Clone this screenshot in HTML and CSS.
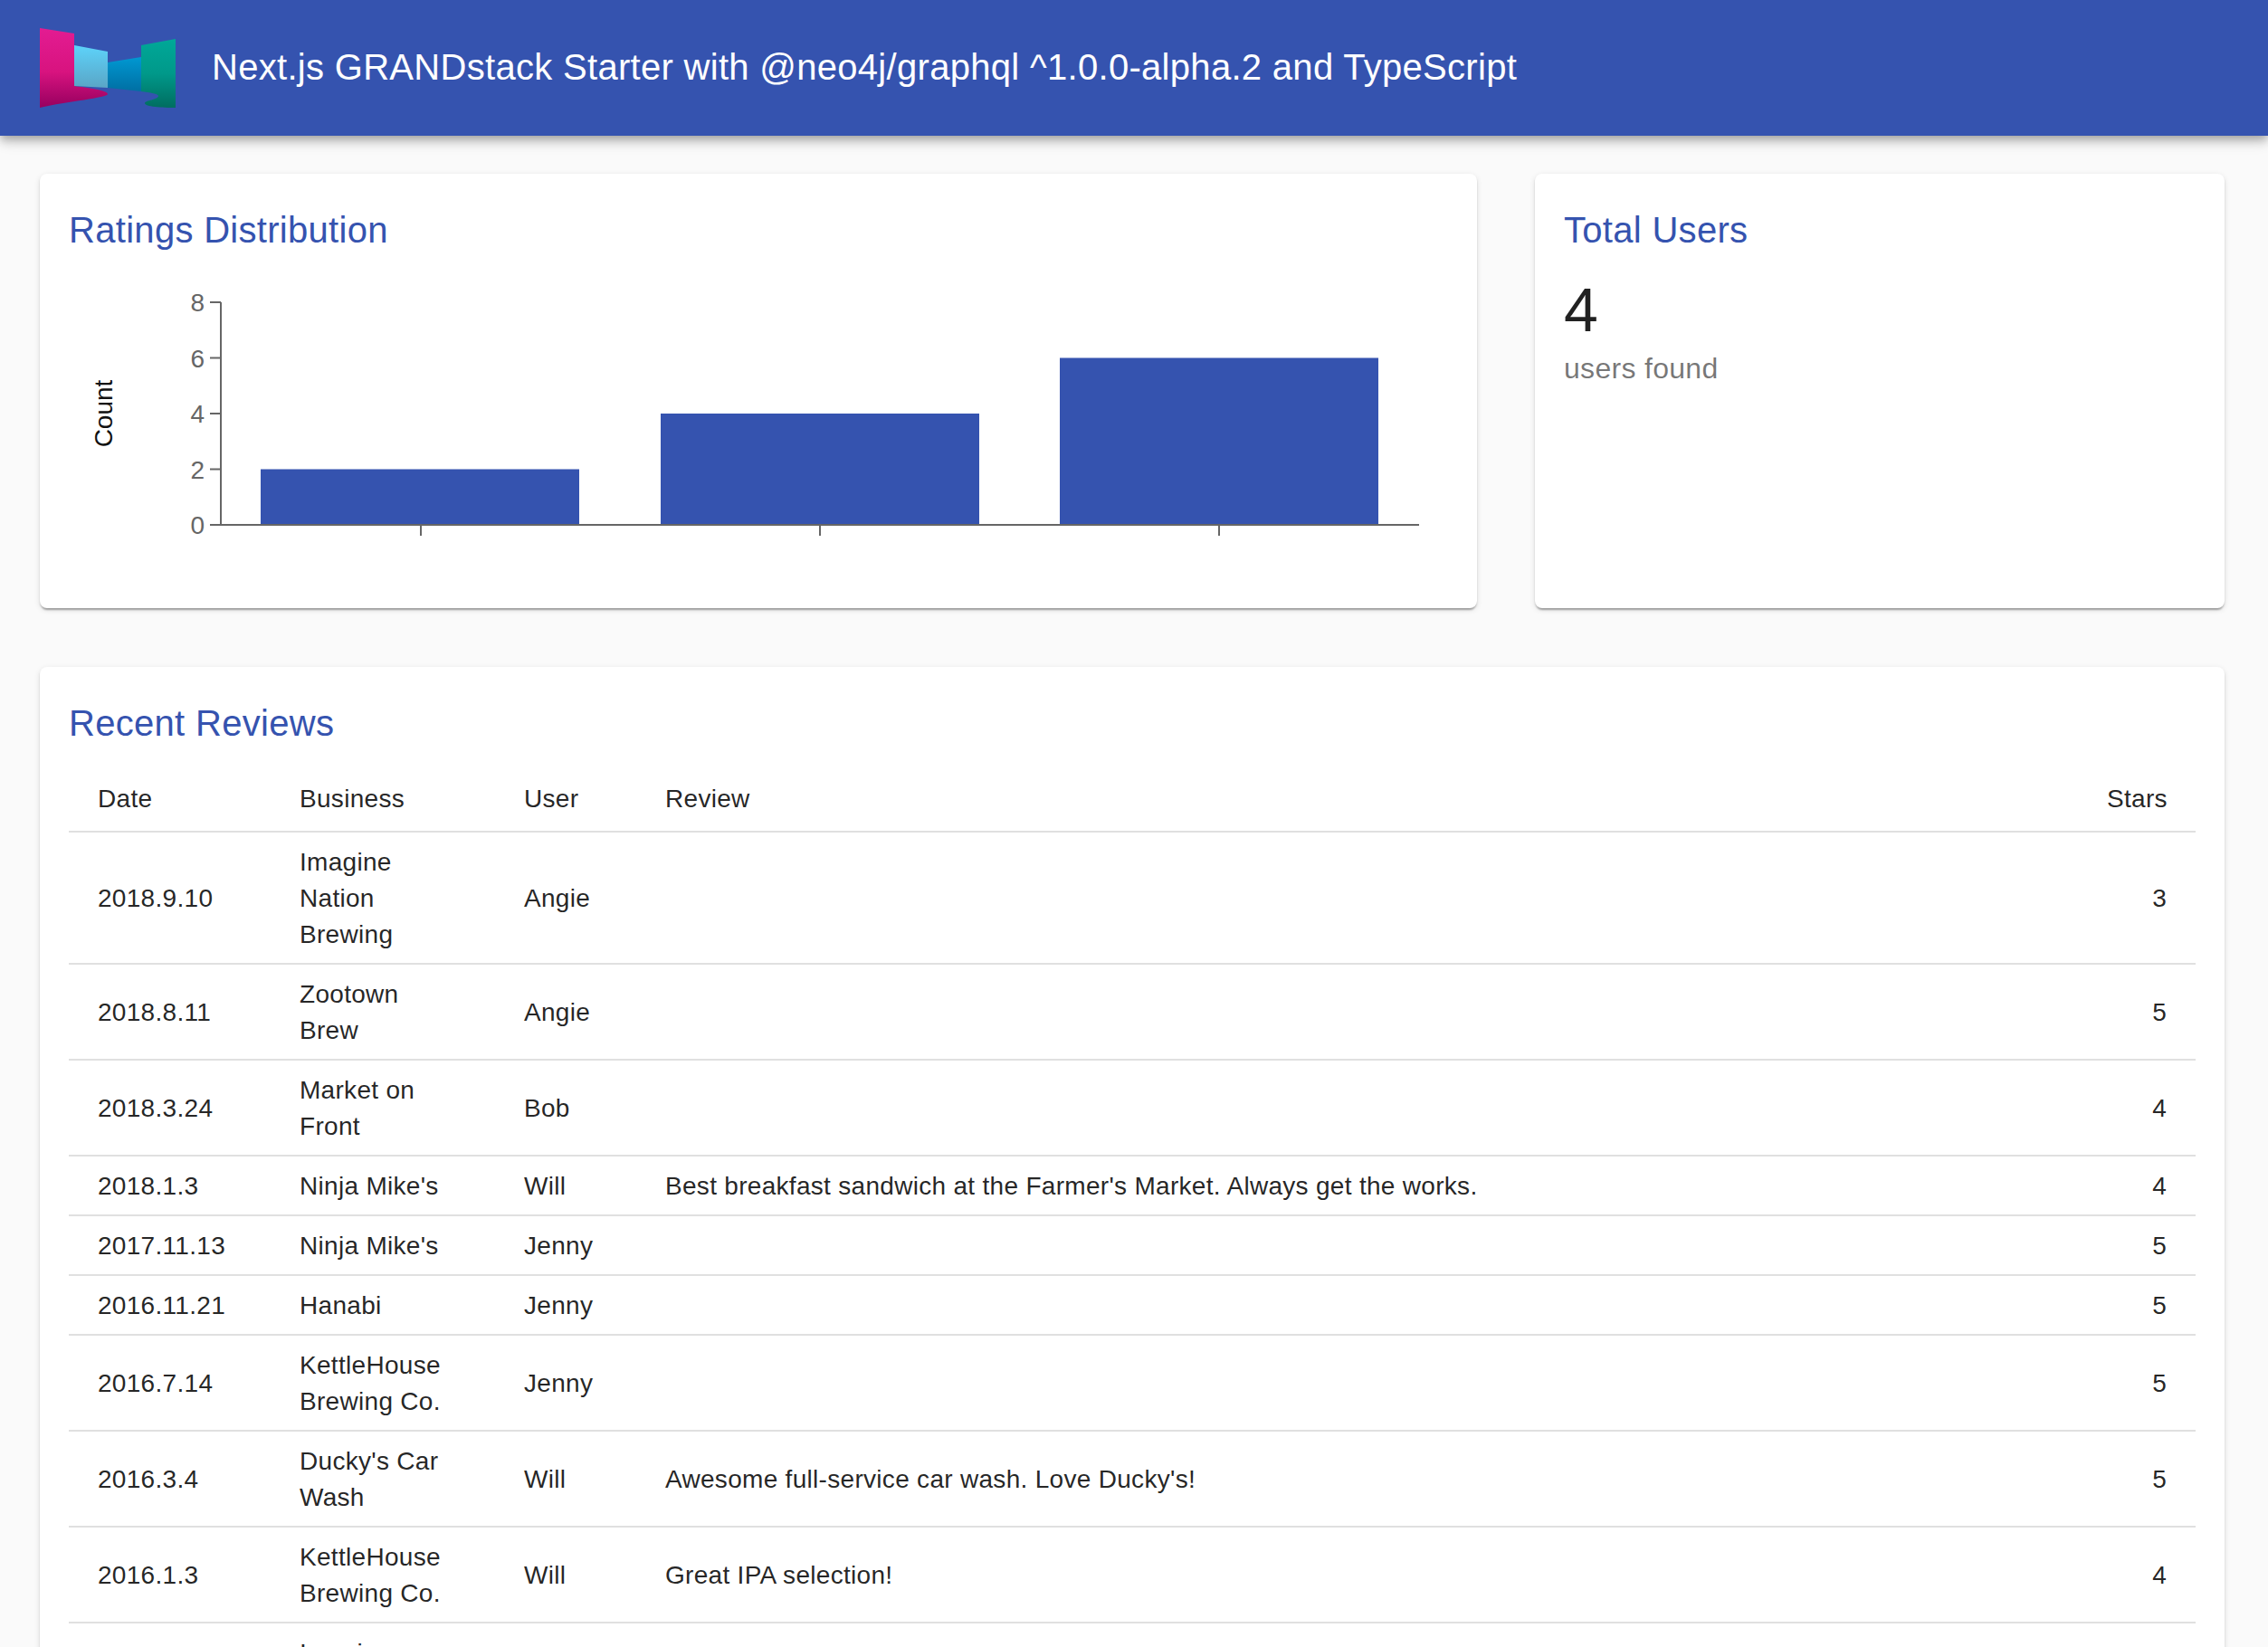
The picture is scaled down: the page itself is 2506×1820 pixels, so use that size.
FILE: index.html
```html
<!DOCTYPE html>
<html lang="en">
<head>
  <meta charset="UTF-8" />
  <meta name="viewport" content="width=device-width, initial-scale=1.0" />
  <title>Next.js GRANDstack Starter</title>
  <link rel="stylesheet" href="styles.css">
</head>
<body>
  <!-- Top bar -->
  <header class="app-bar">
    <svg class="logo" viewBox="0 0 150 88" width="150" height="88">
      <defs>
        <linearGradient id="g-pink" x1="0" y1="0" x2="0" y2="1"><stop offset="0" stop-color="#e31c92"/><stop offset="0.55" stop-color="#d8137f"/><stop offset="1" stop-color="#96005f"/></linearGradient>
        <linearGradient id="g-sky" x1="0" y1="0" x2="0" y2="1"><stop offset="0" stop-color="#5dd3fa"/><stop offset="1" stop-color="#5aa5c6"/></linearGradient>
        <linearGradient id="g-blue" x1="0" y1="0" x2="0" y2="1"><stop offset="0" stop-color="#0098d2"/><stop offset="1" stop-color="#006fa3"/></linearGradient>
        <linearGradient id="g-teal" x1="0" y1="0" x2="0" y2="1"><stop offset="0" stop-color="#00a898"/><stop offset="0.5" stop-color="#00998a"/><stop offset="1" stop-color="#006d60"/></linearGradient>
      </defs>
      <path fill="url(#g-pink)" d="M0 0 L38 6 L38 64 C55 66 75 69 75 73 C75 77 30 81 0 88 Z"/>
      <path fill="url(#g-sky)" d="M38 19 L75 26 L75 66 L38 64 Z"/>
      <path fill="url(#g-blue)" d="M75 38 L112 32 L112 70 L75 66 Z"/>
      <path fill="url(#g-teal)" d="M112 19 L150 12 L150 88 C135 88 116 87 116 83 C116 80 131 79 131 75 C131 73 122 71 112 70 Z"/>
    </svg>
    <h1 class="app-title">Next.js GRANDstack Starter with @neo4j/graphql ^1.0.0-alpha.2 and TypeScript</h1>
  </header>

  <main class="dashboard">
    <!-- Ratings chart -->
    <section class="card">
      <h2 class="card-title">Ratings Distribution</h2>
      <svg class="chart" viewBox="0 0 1524 338" width="1524" height="338">
        <rect class="bar" x="212" y="216.5" width="352" height="61.5"/>
        <rect class="bar" x="654" y="155" width="352" height="123"/>
        <rect class="bar" x="1095" y="93.5" width="352" height="184.5"/>
        <path class="axis" d="M168 32 V278 H1492"/>
        <path class="axis" d="M156 32 H168 M156 93.5 H168 M156 155 H168 M156 216.5 H168 M156 278 H168"/>
        <path class="axis" d="M389 278 V290 M830 278 V290 M1271 278 V290"/>
        <text class="tick" x="150" y="42">8</text>
        <text class="tick" x="150" y="103.500">6</text>
        <text class="tick" x="150" y="165">4</text>
        <text class="tick" x="150" y="226.500">2</text>
        <text class="tick" x="150" y="288">0</text>
        <text class="axis-label" transform="translate(48 155) rotate(-90)">Count</text>
      </svg>
    </section>

    <!-- User count -->
    <section class="card">
      <h2 class="card-title">Total Users</h2>
      <div class="stat-value">4</div>
      <p class="stat-caption">users found</p>
    </section>

    <!-- Review table -->
    <section class="card card-wide">
      <h2 class="card-title">Recent Reviews</h2>
      <table class="reviews">
        <colgroup>
          <col class="col-date">
          <col class="col-business">
          <col class="col-user">
          <col>
          <col class="col-stars">
        </colgroup>
        <thead>
          <tr><th>Date</th><th>Business</th><th>User</th><th>Review</th><th class="num">Stars</th></tr>
        </thead>
        <tbody>
          <tr><td>2018.9.10</td><td class="business">Imagine Nation Brewing</td><td>Angie</td><td></td><td class="num">3</td></tr>
          <tr><td>2018.8.11</td><td class="business">Zootown Brew</td><td>Angie</td><td></td><td class="num">5</td></tr>
          <tr><td>2018.3.24</td><td class="business">Market on Front</td><td>Bob</td><td></td><td class="num">4</td></tr>
          <tr><td>2018.1.3</td><td class="business">Ninja Mike's</td><td>Will</td><td>Best breakfast sandwich at the Farmer's Market. Always get the works.</td><td class="num">4</td></tr>
          <tr><td>2017.11.13</td><td class="business">Ninja Mike's</td><td>Jenny</td><td></td><td class="num">5</td></tr>
          <tr><td>2016.11.21</td><td class="business">Hanabi</td><td>Jenny</td><td></td><td class="num">5</td></tr>
          <tr><td>2016.7.14</td><td class="business">KettleHouse Brewing Co.</td><td>Jenny</td><td></td><td class="num">5</td></tr>
          <tr><td>2016.3.4</td><td class="business">Ducky's Car Wash</td><td>Will</td><td>Awesome full-service car wash. Love Ducky's!</td><td class="num">5</td></tr>
          <tr><td>2016.1.3</td><td class="business">KettleHouse Brewing Co.</td><td>Will</td><td>Great IPA selection!</td><td class="num">4</td></tr>
          <tr><td></td><td class="business">Imagine Nation Brewing</td><td></td><td></td><td></td></tr>
        </tbody>
      </table>
    </section>
  </main>
</body>
</html>
```

FILE: styles.css
```css
html, body {
  height: 100%;
  overflow: hidden;
}
body {
  margin: 0;
  font-family: "Liberation Sans", Arial, sans-serif;
  background-color: #fafafa;
  color: rgba(0, 0, 0, 0.87);
}

/* top bar */
.app-bar {
  height: 150px;
  padding: 0 48px 0 44px;
  display: flex;
  align-items: center;
  gap: 41px;
  background-color: #3553af;
  color: #fff;
  box-shadow: 0 4px 8px -2px rgba(0, 0, 0, 0.2), 0 8px 10px 0 rgba(0, 0, 0, 0.14), 0 2px 20px 0 rgba(0, 0, 0, 0.12);
  position: relative;
}
.logo {
  flex: none;
  display: block;
}
.app-title {
  margin: 0 0 3px -1px;
  font-size: 40px;
  font-weight: 400;
  line-height: 1.6;
  letter-spacing: 0.3px;
}

/* cards */
.dashboard {
  display: grid;
  grid-template-columns: 1588px 762px;
  column-gap: 64px;
  row-gap: 65px;
  padding: 42px 48px 0 44px;
}
.card {
  height: 480px;
  padding: 32px;
  box-sizing: border-box;
  background-color: #fff;
  border-radius: 8px;
  box-shadow: 0 4px 2px -2px rgba(0, 0, 0, 0.2), 0 2px 2px 0 rgba(0, 0, 0, 0.14), 0 2px 6px 0 rgba(0, 0, 0, 0.12);
}
.card-wide {
  grid-column: 1 / 3;
  height: auto;
}
.card-title {
  margin: 0 0 18px;
  font-size: 40px;
  font-weight: 400;
  line-height: 60px;
  letter-spacing: 0.3px;
  color: #3553af;
}

/* chart */
.chart {
  display: block;
}
.bar {
  fill: #3553af;
}
.axis {
  fill: none;
  stroke: #666;
  stroke-width: 2;
}
.tick {
  font-size: 28px;
  fill: #666;
  text-anchor: end;
}
.axis-label {
  font-size: 28px;
  fill: #111;
  text-anchor: middle;
}

/* total users */
.stat-value {
  font-size: 68px;
  line-height: 81px;
}
.stat-caption {
  margin: 0;
  font-size: 32px;
  line-height: 48px;
  letter-spacing: 0.3px;
  color: rgba(0, 0, 0, 0.54);
}

/* reviews table */
.reviews {
  width: 100%;
  table-layout: fixed;
  border-collapse: collapse;
  font-size: 28px;
  line-height: 40px;
  letter-spacing: 0.3px;
}
.col-date { width: 223px; }
.col-business { width: 248px; }
.col-user { width: 156px; }
.col-stars { width: 130px; }
.reviews th, .reviews td {
  padding: 13px 32px 11px;
  text-align: left;
  font-weight: 400;
  border-bottom: 2px solid #e0e0e0;
}
.reviews th {
  padding: 12px 32px;
  line-height: 47px;
}
.reviews .business {
  padding-right: 40px;
}
.reviews .num {
  text-align: right;
}
.reviews th.num {
  padding-right: 33px;
}
```
